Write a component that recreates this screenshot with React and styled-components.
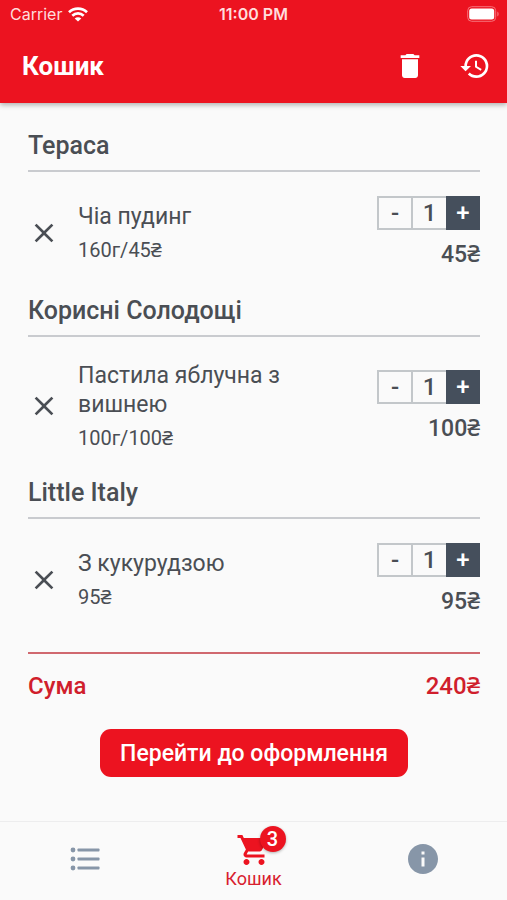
import React, { useState } from "react";
import styled, { createGlobalStyle } from "styled-components";
import { MdClose, MdDelete, MdHistory, MdInfo, MdShoppingCart } from "react-icons/md";


const GlobalStyle = createGlobalStyle`
    * {
        box-sizing: border-box;
    }

    body {
        margin: 0;
        background: #fafafa;
        font-family: Roboto, "Noto Sans", sans-serif;
        color: #4a4e54;
    }

    button {
        font-family: inherit;
        border: none;
        padding: 0;
        cursor: pointer;
    }
`

const Page = styled.div`
    display: flex;
    flex-direction: column;
    min-height: 100vh;
`

const Header = styled.header`
    background: #ec1320;
    color: #fff;
    box-shadow: 0 2px 5px rgba(0, 0, 0, 0.3);
`

const StatusBar = styled.div`
    display: grid;
    grid-template-columns: 1fr auto 1fr;
    align-items: center;
    height: 28px;
    padding: 0 8px;
    font-family: Inter, sans-serif;
    font-size: 16px;
    color: #ffdcdc;
`

const Carrier = styled.div`
    display: flex;
    align-items: center;
    gap: 6px;
    padding-left: 2px;
`

const Clock = styled.div`
    font-weight: 600;
`

const Battery = styled.svg`
    justify-self: end;
`

const TitleBar = styled.div`
    display: flex;
    align-items: center;
    justify-content: space-between;
    height: 75px;
    padding: 0 16px 0 22px;
`

const Title = styled.h1`
    margin: 0;
    font-size: 26px;
    font-weight: 700;
    line-height: 32px;
`

const Actions = styled.div`
    display: flex;
    gap: 33px;
`

const IconButton = styled.button`
    display: flex;
    background: none;
    color: inherit;
`

const Content = styled.main`
    flex: 1;
    padding: 29px 27px 28px 28px;
`

const Section = styled.section`
    margin-bottom: 28px;
`

const SectionTitle = styled.h2`
    margin: 0;
    padding-bottom: 10px;
    border-bottom: 2px solid #c9cbcf;
    font-size: 25px;
    font-weight: 500;
    line-height: 28px;
`

const Item = styled.div`
    display: flex;
    align-items: center;
    padding-top: 24px;
`

const RemoveButton = styled(IconButton)`
    width: 50px;
`

const ItemInfo = styled.div`
    flex: 1;
    padding-right: 60px;
`

const ItemName = styled.div`
    font-size: 23px;
    line-height: 29px;
`

const ItemDetails = styled.div`
    margin-top: 6px;
    font-size: 20px;
    line-height: 26px;
`

const ItemSide = styled.div`
    display: flex;
    flex-direction: column;
    align-items: flex-end;
    gap: 11px;
`

const Stepper = styled.div`
    display: flex;
    height: 34px;
    border: 2px solid #c3c7ca;
    border-right: none;
`

const StepButton = styled.button`
    width: ${props => props.$dark ? "34px" : "32px"};
    margin: ${props => props.$dark ? "-2px 0" : "0"};
    background: ${props => props.$dark ? "#454f5c" : "none"};
    color: ${props => props.$dark ? "#fff" : "#4a4e54"};
    font-size: 24px;
    font-weight: 500;
    line-height: 28px;
`

const Count = styled.output`
    width: 35px;
    border-left: 2px solid #c3c7ca;
    font-size: 24px;
    font-weight: 500;
    line-height: 30px;
    text-align: center;
`

const Price = styled.div`
    font-size: 23px;
    font-weight: 500;
    line-height: 28px;
`

const Total = styled.div`
    display: flex;
    justify-content: space-between;
    margin-top: 36px;
    padding-top: 17px;
    border-top: 2px solid #d0686f;
    color: #d01e2c;
    font-size: 24px;
    font-weight: 500;
    line-height: 30px;
`

const OrderButton = styled.button`
    display: block;
    margin: 28px auto 0;
    padding: 0 20px;
    height: 48px;
    border-radius: 11px;
    background: #ec1320;
    color: #fff;
    font-size: 23px;
    font-weight: 500;
`

const TabBar = styled.nav`
    display: grid;
    grid-template-columns: repeat(3, 1fr);
    height: 79px;
    border-top: 1px solid #ededee;
`

const Tab = styled.a`
    display: flex;
    flex-direction: column;
    align-items: center;
    justify-content: center;
    padding-bottom: ${props => props.$active ? "0" : "4px"};
    color: ${props => props.$active ? "#d8202d" : "#8796a8"};
    font-size: 18px;
    line-height: 22px;
    text-decoration: none;
`

const TabIcon = styled.span`
    position: relative;
    display: flex;
    color: #ec1320;
`

const Badge = styled.span`
    position: absolute;
    top: -6px;
    right: -14px;
    width: 26px;
    height: 26px;
    border-radius: 50%;
    background: #ec1320;
    box-shadow: 0 1px 3px rgba(0, 0, 0, 0.3);
    color: #fff;
    font-size: 20px;
    font-weight: 500;
    line-height: 26px;
    text-align: center;
`


const sections = [
    { title: "Тераса", item: { name: "Чіа пудинг", weight: "160г", price: 45 } },
    { title: "Корисні Солодощі", item: { name: "Пастила яблучна з вишнею", weight: "100г", price: 100 } },
    { title: "Little Italy", item: { name: "З кукурудзою", price: 95 } },
];


function WifiIcon() {
    return (
        <svg width="20" height="15" viewBox="0 0 20 15" fill="none" stroke="#fff" strokeWidth="2.7" aria-hidden="true">
            <path d="M1 5.2C6 .4 14 .4 19 5.2" />
            <path d="M4.3 8.7c3.3-3.1 8.1-3.1 11.4 0" />
            <path d="M10 14.6 6.7 11.4c1.8-1.7 4.8-1.7 6.6 0z" fill="#fff" stroke="none" />
        </svg>
    );
}

function BatteryIcon() {
    return (
        <Battery width="32" height="16" viewBox="0 0 32 16" aria-hidden="true">
            <rect x=".7" y=".7" width="28" height="14.6" rx="4" fill="none" stroke="#f7727a" strokeWidth="1" />
            <rect x="2.2" y="2.5" width="25" height="11" rx="2.5" fill="#fff" />
            <path d="M30.3 5.5c1.8.7 1.8 4.3 0 5z" fill="#f7727a" />
        </Battery>
    );
}

function ListIcon() {
    return (
        <svg width="30" height="24" viewBox="0 0 30 24" fill="currentColor" aria-hidden="true">
            <circle cx="3" cy="3" r="2.4" />
            <circle cx="3" cy="12" r="2.4" />
            <circle cx="3" cy="21" r="2.4" />
            <rect x="7.5" y="1.4" width="22" height="3.2" rx=".8" />
            <rect x="7.5" y="10.4" width="22" height="3.2" rx=".8" />
            <rect x="7.5" y="19.4" width="22" height="3.2" rx=".8" />
        </svg>
    );
}


function CartItem({ item, count, onChange }) {
    return (
        <Item>
            <RemoveButton aria-label="Видалити" onClick={() => onChange(0)}>
                <MdClose size={32} />
            </RemoveButton>
            <ItemInfo>
                <ItemName>{item.name}</ItemName>
                <ItemDetails>{item.weight && `${item.weight}/`}{item.price}₴</ItemDetails>
            </ItemInfo>
            <ItemSide>
                <Stepper>
                    <StepButton onClick={() => onChange(Math.max(1, count - 1))}>-</StepButton>
                    <Count>{count}</Count>
                    <StepButton $dark onClick={() => onChange(count + 1)}>+</StepButton>
                </Stepper>
                <Price>{item.price * count}₴</Price>
            </ItemSide>
        </Item>
    );
}


function App() {
    const [counts, setCounts] = useState([1, 1, 1]);

    const changeCount = (index, value) => {
        setCounts(counts.map((c, i) => i === index ? value : c));
    };

    const total = sections.reduce((sum, s, i) => sum + s.item.price * counts[i], 0);

    return (
        <Page>
            <GlobalStyle />
            <Header>
                <StatusBar>
                    <Carrier>Carrier <WifiIcon /></Carrier>
                    <Clock>11:00 PM</Clock>
                    <BatteryIcon />
                </StatusBar>
                <TitleBar>
                    <Title>Кошик</Title>
                    <Actions>
                        <IconButton aria-label="Очистити" onClick={() => setCounts([0, 0, 0])}><MdDelete size={32} /></IconButton>
                        <IconButton aria-label="Історія"><MdHistory size={32} /></IconButton>
                    </Actions>
                </TitleBar>
            </Header>
            <Content>
                {sections.map((section, i) => counts[i] > 0 && (
                    <Section key={section.title}>
                        <SectionTitle>{section.title}</SectionTitle>
                        <CartItem item={section.item} count={counts[i]} onChange={value => changeCount(i, value)} />
                    </Section>
                ))}
                <Total>
                    <span>Сума</span>
                    <span>{total}₴</span>
                </Total>
                <OrderButton>Перейти до оформлення</OrderButton>
            </Content>
            <TabBar>
                <Tab href="#menu" aria-label="Меню"><ListIcon /></Tab>
                <Tab href="#cart" $active>
                    <TabIcon>
                        <MdShoppingCart size={36} />
                        <Badge>{counts.filter(c => c > 0).length}</Badge>
                    </TabIcon>
                    Кошик
                </Tab>
                <Tab href="#info" aria-label="Інформація"><MdInfo size={36} /></Tab>
            </TabBar>
        </Page>
    );
};

export default App;
